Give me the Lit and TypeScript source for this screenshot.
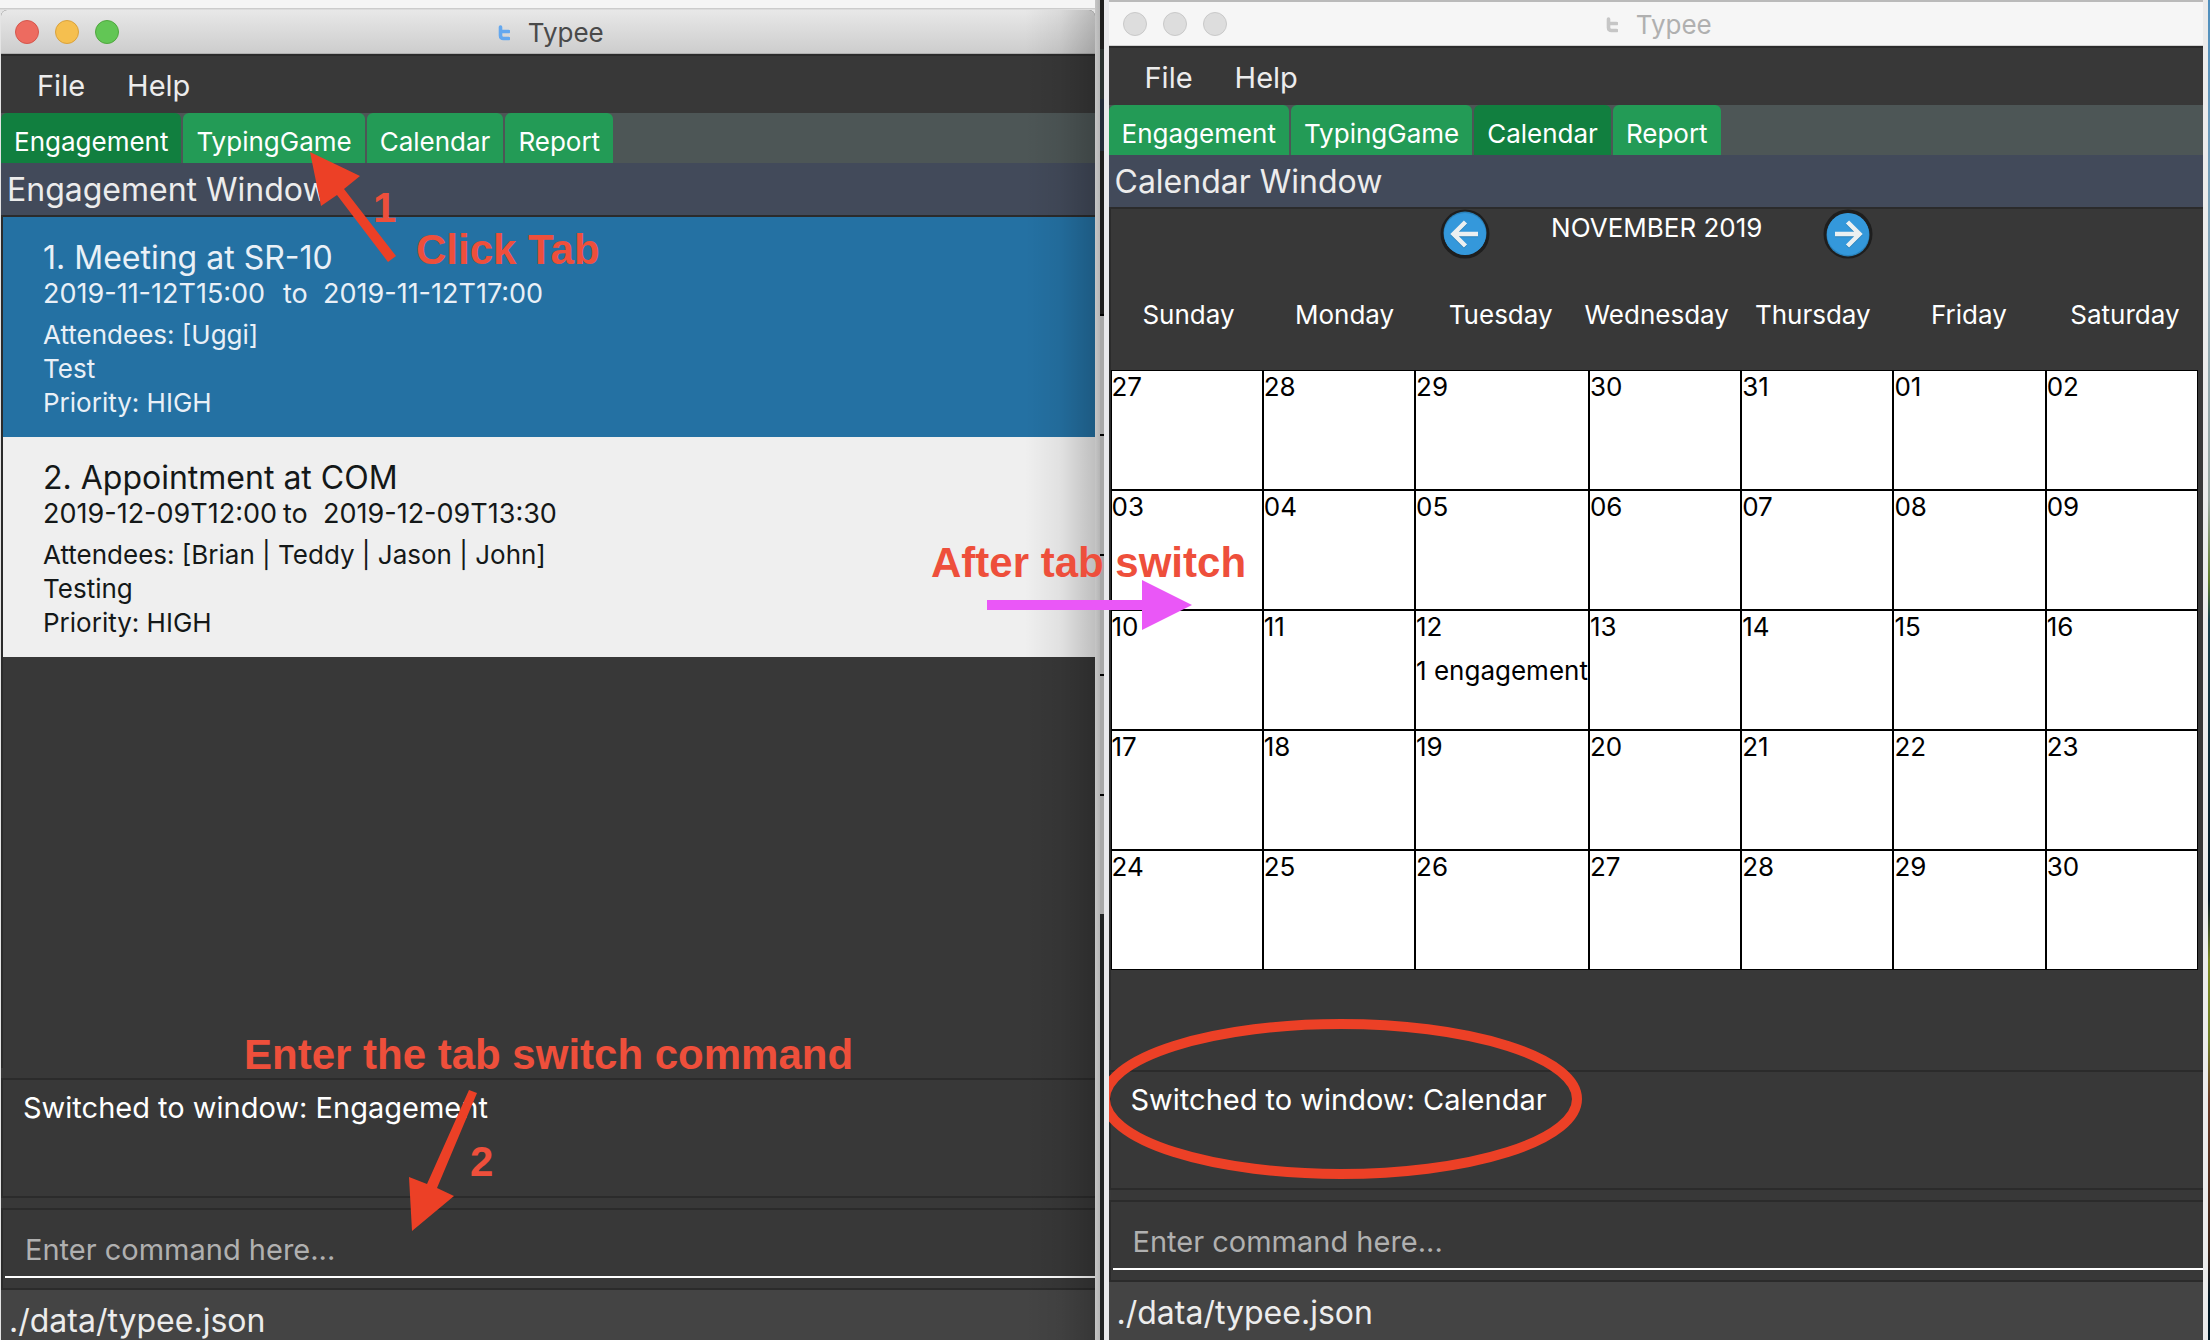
import { LitElement, html, css, svg, nothing } from "lit";
import { customElement, property } from "lit/decorators.js";

const TABS = ["Engagement", "TypingGame", "Calendar", "Report"];
const WEEKDAYS = ["Sunday", "Monday", "Tuesday", "Wednesday", "Thursday", "Friday", "Saturday"];
const WEEKS = [
  ["27", "28", "29", "30", "31", "01", "02"],
  ["03", "04", "05", "06", "07", "08", "09"],
  ["10", "11", "12", "13", "14", "15", "16"],
  ["17", "18", "19", "20", "21", "22", "23"],
  ["24", "25", "26", "27", "28", "29", "30"],
];
const NOTES: Record<string, string> = { "12": "1 engagement" };

interface Engagement {
  title: string;
  start: string;
  end: string;
  attendees: string;
  description: string;
  priority: string;
}

const ENGAGEMENTS: Engagement[] = [
  {
    title: "1. Meeting at SR-10",
    start: "2019-11-12T15:00",
    end: "2019-11-12T17:00",
    attendees: "[Uggi]",
    description: "Test",
    priority: "HIGH",
  },
  {
    title: "2. Appointment at COM",
    start: "2019-12-09T12:00",
    end: "2019-12-09T13:30",
    attendees: "[Brian | Teddy | Jason | John]",
    description: "Testing",
    priority: "HIGH",
  },
];

@customElement("engagement-list")
class EngagementList extends LitElement {
  static styles = css`
    :host {
      display: block;
    }
    ul {
      list-style: none;
      margin: 0;
      padding: 0;
    }
    .card {
      box-sizing: border-box;
      min-height: 220px;
      padding: 22px 40px 16px;
      background: #efefef;
      color: #141818;
      font-size: 26px;
      line-height: 34px;
    }
    .card.selected {
      background: #2471a3;
      color: #e9f0f7;
    }
    h2 {
      margin: 0;
      font-size: 32px;
      line-height: 38px;
      font-weight: 400;
    }
    .period {
      display: grid;
      grid-template-columns: 240px 40px auto;
      justify-content: start;
      margin-bottom: 7px;
      font-size: 27px;
    }
    p {
      margin: 0;
    }
  `;

  render() {
    return html`<ul>
      ${ENGAGEMENTS.map(
        (e, i) => html`<li class=${i === 0 ? "card selected" : "card"}>
          <h2>${e.title}</h2>
          <div class="period"><span>${e.start}</span><span>to</span><span>${e.end}</span></div>
          <p>Attendees: ${e.attendees}</p>
          <p>${e.description}</p>
          <p>Priority: ${e.priority}</p>
        </li>`
      )}
    </ul>`;
  }
}

@customElement("month-calendar")
class MonthCalendar extends LitElement {
  static styles = css`
    :host {
      display: block;
      color: #ffffff;
      font-size: 26px;
    }
    .nav {
      display: grid;
      grid-template-columns: 50px 333px 50px;
      justify-content: center;
      height: 78px;
    }
    .month {
      text-align: center;
      line-height: 38px;
    }
    .arrow {
      width: 50px;
      height: 50px;
      padding: 0;
      border: 0;
      background: none;
    }
    .arrow svg {
      display: block;
    }
    table {
      display: block;
    }
    thead {
      display: block;
    }
    thead tr {
      display: grid;
      grid-template-columns: repeat(7, 1fr);
    }
    th {
      padding: 0;
      font-weight: 400;
      line-height: 56px;
      text-align: center;
    }
    tbody {
      display: grid;
      grid-template-columns: repeat(7, 1fr);
      margin: 27px 5px 0 0;
      background: #ffffff;
      color: #000000;
    }
    tbody tr {
      display: contents;
    }
    td {
      box-sizing: border-box;
      height: 120px;
      padding: 0;
      border: 1px solid #000000;
      line-height: 32px;
      white-space: nowrap;
    }
    .note {
      margin-top: 12px;
    }
  `;

  private arrow(flip: boolean) {
    return html`<svg width="50" height="50" viewBox="0 0 50 50" aria-hidden="true">
      <circle cx="25" cy="25" r="24.5" fill="#1e1e1e" />
      <circle cx="25" cy=${flip ? 26 : 24} r="21.5" fill="#2980b9" />
      <circle cx="25" cy="25" r="21" fill="#3498db" />
      <g
        transform=${flip ? "matrix(-1 0 0 1 50 0)" : "matrix(1 0 0 1 0 0)"}
        fill="none"
        stroke-width="4.5"
      >
        <path d="M38 26 H14 M25.5 14 L13.5 26 L25.5 38" stroke="#2980b9" />
        <path d="M38 25 H14 M25.5 13 L13.5 25 L25.5 37" stroke="#ecf0f1" />
      </g>
    </svg>`;
  }

  render() {
    return html`
      <div class="nav">
        <button class="arrow" aria-label="Previous month">${this.arrow(false)}</button>
        <span class="month">NOVEMBER 2019</span>
        <button class="arrow" aria-label="Next month">${this.arrow(true)}</button>
      </div>
      <table>
        <thead>
          <tr>
            ${WEEKDAYS.map((d) => html`<th scope="col">${d}</th>`)}
          </tr>
        </thead>
        <tbody>
          ${WEEKS.map(
            (w) => html`<tr>
              ${w.map(
                (d) => html`<td>${d}${NOTES[d] ? html`<div class="note">${NOTES[d]}</div>` : nothing}</td>`
              )}
            </tr>`
          )}
        </tbody>
      </table>
    `;
  }
}

@customElement("typee-window")
class TypeeWindow extends LitElement {
  @property() view = "Engagement";
  @property({ type: Boolean, reflect: true }) inactive = false;

  static styles = css`
    :host {
      display: flex;
      flex-direction: column;
      min-width: 0;
      background: #383838;
      color: #ececec;
      border-radius: 6px 6px 0 0;
      overflow: hidden;
    }
    .titlebar {
      display: grid;
      grid-template-columns: 1fr auto 1fr;
      align-items: center;
      height: 44px;
      flex: none;
      box-sizing: border-box;
      padding: 0 14px;
      background: linear-gradient(#e8e8e8, #cdcdcd);
      border-bottom: 1px solid #b0b0b0;
      color: #4a4a4a;
      font-size: 26px;
    }
    :host([inactive]) .titlebar {
      background: #f6f6f6;
      border-bottom-color: #d2d2d2;
      color: #b0b0b0;
    }
    .lights {
      display: flex;
      gap: 16px;
    }
    .light {
      box-sizing: border-box;
      width: 24px;
      height: 24px;
      border-radius: 50%;
      border: 1px solid;
    }
    .close {
      background: #ed6b60;
      border-color: #d5564c;
    }
    .minimise {
      background: #f5bf4f;
      border-color: #d9a23d;
    }
    .zoom {
      background: #62c655;
      border-color: #50a73f;
    }
    :host([inactive]) .light {
      background: #dddddd;
      border-color: #c9c9c9;
    }
    .title {
      display: flex;
      align-items: center;
      gap: 18px;
      padding-top: 2px;
    }
    .logo {
      display: block;
      color: #64a8ef;
    }
    :host([inactive]) .logo {
      color: #c6c6c6;
    }
    .menu {
      display: flex;
      align-items: center;
      gap: 42px;
      flex: none;
      height: 59px;
      box-sizing: border-box;
      padding: 2px 36px 0;
      border-top: 2px solid #2b2b2b;
    }
    button {
      font: inherit;
      color: inherit;
      border: 0;
      padding: 0;
      margin: 0;
      background: none;
    }
    .menu button {
      font-size: 29px;
    }
    .tabs {
      display: flex;
      gap: 2px;
      flex: none;
      height: 50px;
      background: #4d5656;
    }
    .tabs button {
      padding: 7px 13px 0;
      border-radius: 6px 6px 0 0;
      background: #239b56;
      color: #ffffff;
      font-size: 26px;
    }
    .tabs .current {
      background: #117f3f;
    }
    h1 {
      margin: 0;
      flex: none;
      padding: 2px 6px 0;
      background: #424a5a;
      font-size: 32px;
      line-height: 50px;
      font-weight: 400;
    }
    .content {
      flex: 1 1 auto;
      min-height: 0;
      border-top: 2px solid #2b2b2b;
      border-left: 2px solid #2b2b2b;
      margin-bottom: 10px;
    }
    .result {
      flex: none;
      box-sizing: border-box;
      height: 120px;
      padding: 12px 20px;
      border: 2px solid #2b2b2b;
      border-right: 0;
      color: #ffffff;
      font-size: 29px;
      line-height: 32px;
    }
    .command {
      flex: none;
      box-sizing: border-box;
      height: 80px;
      margin-top: 10px;
      padding: 0 0 10px 2px;
      border-top: 2px solid #2b2b2b;
      border-left: 2px solid #2b2b2b;
    }
    input {
      display: block;
      box-sizing: border-box;
      width: 100%;
      height: 68px;
      padding: 12px 20px 0;
      border: 0;
      border-bottom: 2px solid #ffffff;
      border-radius: 0;
      outline: 0;
      background: none;
      color: #ffffff;
      font: inherit;
      font-size: 29px;
    }
    input::placeholder {
      color: #b0b0b0;
      opacity: 1;
    }
    footer {
      flex: none;
      box-sizing: border-box;
      height: 60px;
      padding: 12px 8px;
      border-top: 2px solid #2b2b2b;
      background: #444444;
      font-size: 32px;
      line-height: 38px;
    }
  `;

  render() {
    return html`
      <div class="titlebar">
        <div class="lights">
          <button class="light close" aria-label="Close"></button>
          <button class="light minimise" aria-label="Minimise"></button>
          <button class="light zoom" aria-label="Zoom"></button>
        </div>
        <div class="title">
          <svg class="logo" width="18" height="16" viewBox="-6 0 18 16" aria-hidden="true">
            <path
              d="M2.5 2 V10.5 Q2.5 13.5 5.5 13.5 H10.5 M2.5 6.5 H10.5"
              fill="none"
              stroke="currentColor"
              stroke-width="3.6"
              stroke-linecap="round"
            />
          </svg>
          <span>Typee</span>
        </div>
      </div>
      <nav class="menu"><button>File</button><button>Help</button></nav>
      <nav class="tabs">
        ${TABS.map((t) => html`<button class=${t === this.view ? "current" : ""}>${t}</button>`)}
      </nav>
      <h1>${this.view} Window</h1>
      <div class="content">
        ${this.view === "Calendar"
          ? html`<month-calendar></month-calendar>`
          : html`<engagement-list></engagement-list>`}
      </div>
      <div class="result">Switched to window: ${this.view}</div>
      <div class="command">
        <input type="text" aria-label="Command" placeholder="Enter command here..." />
      </div>
      <footer>./data/typee.json</footer>
    `;
  }
}

@customElement("app-root")
class AppRoot extends LitElement {
  static styles = css`
    :host {
      display: block;
      position: relative;
      height: 100vh;
      overflow: hidden;
      font-family: Inter, "Liberation Sans", sans-serif;
      background: linear-gradient(#f5f5f5 8px, #c4c4c4 8px, #e4e4e4 10px);
    }
    .desktop {
      display: grid;
      grid-template-columns: 1fr 14px 1fr 7px;
      height: 100%;
    }
    .left {
      height: calc(100vh - 2px);
      margin: 10px 0 0 1px;
      position: relative;
    }
    /* Shadow that the front window casts on the one behind it. */
    .left::after {
      content: "";
      position: absolute;
      inset: 0 0 0 auto;
      width: 70px;
      background: linear-gradient(to right, rgba(0, 0, 0, 0), rgba(0, 0, 0, 0.06) 50%, rgba(0, 0, 0, 0.2));
      pointer-events: none;
    }
    .right {
      box-sizing: border-box;
      height: 100vh;
      border-top: 2px solid #bababa;
      border-radius: 0;
    }
    .gap {
      display: grid;
      grid-template-columns: 5px 4px 5px;
      background: #e9e9ec;
    }
    .shade {
      background: linear-gradient(to right, #c6c6c6, #b4b4b4);
    }
    .behind {
      background: repeating-linear-gradient(#000000 0 2px, #a8a8a8 2px 120px) 0 314px / 4px 600px no-repeat,
        linear-gradient(
          #1e1e1e 49px,
          #2a3230 49px,
          #2a3230 99px,
          #242c3a 99px,
          #242c3a 151px,
          #1e1e1e 151px,
          #1e1e1e 914px,
          #222425 914px
        );
    }
    .edge {
      border-left: 5px solid #ebebeb;
      background: linear-gradient(
        #4f8fbe,
        #8fa9b4 300px,
        #9aa8a2 500px,
        #5f7d2a 580px,
        #16404c 620px,
        #001622 900px,
        #7c8a24 960px,
        #6f7f28 1040px,
        #6b3a28 1100px,
        #3a2218 1250px,
        #001622 1300px
      );
    }
    .notes {
      position: absolute;
      left: 0;
      top: 0;
      pointer-events: none;
    }
    .notes text {
      font-family: "Liberation Sans", Arial, sans-serif;
      font-weight: 700;
      font-size: 42px;
      fill: #ee4f3b;
    }
  `;

  render() {
    return html`
      <div class="desktop">
        <typee-window class="left" view="Engagement"></typee-window>
        <div class="gap"><span class="shade"></span><span class="behind"></span></div>
        <typee-window class="right" view="Calendar" inactive></typee-window>
        <div class="edge"></div>
      </div>
      <svg class="notes" width="2210" height="1340" viewBox="0 0 2210 1340">
        ${svg`
          <clipPath id="front"><rect x="1109" y="0" width="1101" height="1340" /></clipPath>
          <polygon points="310,152 360,176 344,189 396,256 388,262 337,195 321,206" fill="#ec4026" />
          <polygon points="469,1090 477,1093 437,1188 454,1196 412,1231 409,1177 427,1184" fill="#ec4026" />
          <polygon points="987,600 1142,600 1142,580 1192,605 1142,630 1142,610 987,610" fill="#ea57f7" />
          <ellipse cx="1341" cy="1099" rx="236" ry="75" fill="none" stroke="#ec4026" stroke-width="10" clip-path="url(#front)" />
          <text x="373" y="222">1</text>
          <text x="416" y="264">Click Tab</text>
          <text x="244" y="1069">Enter the tab switch command</text>
          <text x="470" y="1176">2</text>
          <text x="931" y="577">After tab switch</text>
        `}
      </svg>
    `;
  }
}
